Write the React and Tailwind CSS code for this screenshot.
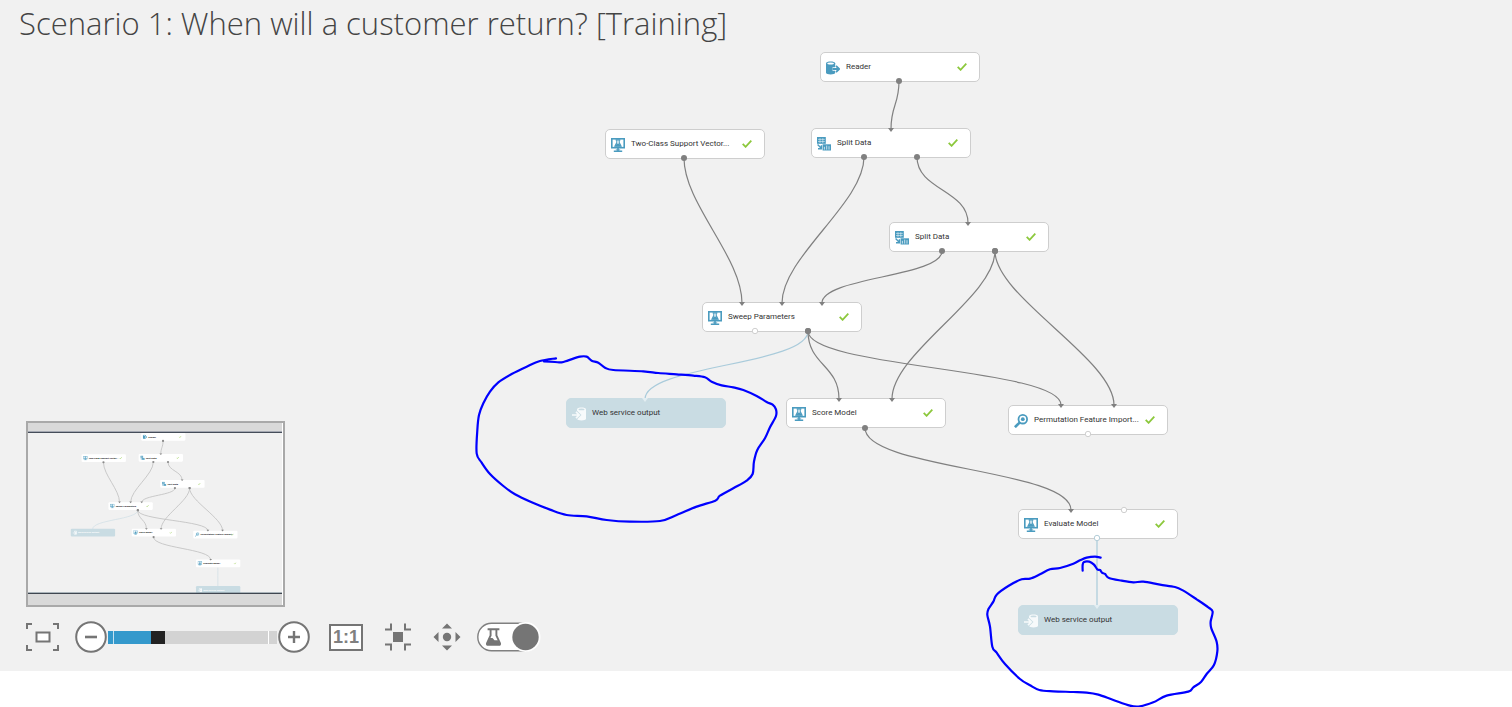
import React, { useState } from "react";

const NODE_W = 160;
const NODE_H = 30;

const nodes = [
  { id: "reader", x: 820, y: 52, label: "Reader", icon: "reader", done: true },
  { id: "svm", x: 605, y: 129, label: "Two-Class Support Vector...", icon: "model", done: true },
  { id: "split1", x: 811, y: 128, label: "Split Data", icon: "split", done: true },
  { id: "split2", x: 889, y: 222, label: "Split Data", icon: "split", done: true },
  { id: "sweep", x: 702, y: 302, label: "Sweep Parameters", icon: "model", done: true },
  { id: "out1", x: 566, y: 398, label: "Web service output", icon: "output", service: true },
  { id: "score", x: 786, y: 398, label: "Score Model", icon: "model", done: true },
  { id: "perm", x: 1008, y: 405, label: "Permutation Feature Import...", icon: "search", done: true },
  { id: "eval", x: 1018, y: 509, label: "Evaluate Model", icon: "model", done: true },
  { id: "out2", x: 1018, y: 605, label: "Web service output", icon: "output", service: true },
];

const edges = [
  { from: [899, 81], to: [891, 129] },
  { from: [684, 158], to: [742, 303] },
  { from: [864, 157], to: [782, 303] },
  { from: [917, 157], to: [968, 223] },
  { from: [942, 251], to: [822, 303] },
  { from: [995, 251], to: [892, 399] },
  { from: [995, 251], to: [1114, 405] },
  { from: [808, 331], to: [645, 399], service: true },
  { from: [808, 331], to: [839, 399] },
  { from: [808, 331], to: [1061, 405] },
  { from: [865, 428], to: [1071, 510] },
  { from: [1097, 538], to: [1097, 606], service: true },
];

const openPorts = [
  { x: 755, y: 331 },
  { x: 1088, y: 434 },
  { x: 1124, y: 510 },
  { x: 1097, y: 538, service: true },
];

const inkLeft = [
  [288, 55], [240, 63], [200, 80], [155, 102], [115, 127], [90, 155], [70, 190], [57, 225], [52, 270],
  [50, 340], [65, 368], [90, 402], [130, 438], [165, 463], [215, 487], [270, 509], [320, 525], [380, 529],
  [440, 540], [510, 545], [600, 543], [650, 525], [710, 500], [766, 482], [780, 467], [820, 445], [860, 422],
  [878, 402], [882, 365], [892, 330], [915, 295], [930, 262], [948, 228], [948, 208], [938, 194], [920, 186],
  [890, 168], [850, 150], [820, 142], [785, 136], [755, 125], [735, 112], [700, 107], [650, 103], [595, 99],
  [550, 94], [460, 90], [435, 83], [415, 68], [395, 62], [380, 50], [360, 50], [325, 61], [305, 67], [285, 66], [252, 64],
];

const inkRight = [
  [392, 203], [375, 200], [350, 203], [330, 211], [310, 221], [270, 234], [240, 238], [210, 253], [180, 266],
  [155, 268], [115, 288], [80, 314], [70, 335], [55, 358], [52, 375], [60, 410], [67, 470], [80, 488],
  [105, 522], [150, 567], [180, 586], [208, 600], [250, 604], [310, 606], [350, 608], [385, 614], [430, 630],
  [480, 647], [510, 649], [550, 637], [590, 617], [655, 605], [670, 592], [693, 576], [710, 552], [732, 525],
  [742, 485], [740, 455], [724, 415], [722, 395], [728, 365], [715, 352], [680, 328], [640, 302], [615, 291],
  [570, 284], [520, 275], [490, 277], [455, 272], [417, 264], [405, 252], [396, 248], [390, 240], [382, 238],
  [372, 224], [358, 215], [342, 216], [338, 225], [338, 242],
];

// Catmull-Rom spline through the pen points.
function inkPath(pts) {
  let d = `M${pts[0].join(" ")}`;
  for (let i = 0; i < pts.length - 1; i++) {
    const p0 = pts[i - 1] || pts[i];
    const p1 = pts[i];
    const p2 = pts[i + 1];
    const p3 = pts[i + 2] || p2;
    d += `C${p1[0] + (p2[0] - p0[0]) / 6} ${p1[1] + (p2[1] - p0[1]) / 6} ${p2[0] - (p3[0] - p1[0]) / 6} ${p2[1] - (p3[1] - p1[1]) / 6} ${p2[0]} ${p2[1]}`;
  }
  return d;
}

function edgePath({ from, to }) {
  const reach = Math.min((to[1] - from[1]) / 2, 46);
  return `M${from[0]} ${from[1]}C${from[0]} ${from[1] + reach} ${to[0]} ${to[1] - reach} ${to[0]} ${to[1]}`;
}

function ModelIcon(props) {
  return (
    <svg viewBox="0 0 14 14" width="14" height="14" fill="none" stroke="#4a9bbf" {...props}>
      <rect x="0.8" y="0.8" width="12.4" height="8.9" strokeWidth="1.6" />
      <path d="M7 9.5V12.6M2.8 13.2H11.2" strokeWidth="1.6" />
      <path d="M4.8 11.9H9.2" strokeWidth="0.9" />
      <path d="M4.6 1.9H9.4M5.8 2V4.6L3.9 8.2H10.1L8.2 4.6V2" strokeWidth="1.1" />
      <path d="M5.6 5.4H8.4L9.8 8.4H4.2Z" fill="#4a9bbf" stroke="none" />
    </svg>
  );
}

function SplitIcon(props) {
  return (
    <svg viewBox="0 0 14 14" width="14" height="14" fill="#4a9bbf" {...props}>
      <rect x="0" y="0" width="8.8" height="6.8" />
      <path d="M1 2.4H7.8M1 4.5H7.8M3 1.2V6M5.8 1.2V6" stroke="#fff" strokeWidth="0.5" />
      <path d="M0.6 7.6L4 11M4.4 8.2V11.8H1" fill="none" stroke="#4a9bbf" strokeWidth="1.4" />
      <rect x="5.6" y="7.3" width="8.4" height="6.2" />
      <path d="M7.4 9.8V12.6M9.7 8.6V12.6M12 9.2V12.6" stroke="#fff" strokeWidth="0.7" />
    </svg>
  );
}

function ReaderIcon(props) {
  return (
    <svg viewBox="0 0 14 14" width="14" height="14" {...props}>
      <path d="M0 2.2C0 -0.2 9.2 -0.2 9.2 2.2V11.8C9.2 14 0 14 0 11.8Z" fill="#4a9bbf" />
      <ellipse cx="4.6" cy="2.4" rx="3.3" ry="1" fill="#fff" />
      <path d="M6.5 8H13M10 4.8L13.2 8L10 11.2" fill="none" stroke="#fff" strokeWidth="3.4" />
      <path d="M6.5 8H13M10 4.8L13.2 8L10 11.2" fill="none" stroke="#4a9bbf" strokeWidth="1.8" />
    </svg>
  );
}

function OutputIcon(props) {
  return (
    <svg viewBox="0 0 14 14" width="14" height="14" {...props}>
      <path d="M5 2.2C5 0 14 0 14 2.2V11.8C14 14 5 14 5 11.8Z" fill="#f7fafb" />
      <ellipse cx="9.5" cy="2.4" rx="3.1" ry="0.9" fill="#c9dce3" />
      <path d="M0 8H7M4 4.8L7.2 8L4 11.2" fill="none" stroke="#c9dce3" strokeWidth="3.2" />
      <path d="M0 8H7M4 4.8L7.2 8L4 11.2" fill="none" stroke="#f7fafb" strokeWidth="1.7" />
    </svg>
  );
}

function SearchIcon(props) {
  return (
    <svg viewBox="0 0 14 14" width="14" height="14" fill="none" stroke="#4a9bbf" {...props}>
      <circle cx="8.8" cy="5.2" r="4.3" strokeWidth="1.8" />
      <circle cx="8.8" cy="5.2" r="1.9" fill="#4a9bbf" stroke="none" />
      <path d="M5.6 8.6L0.9 13.2" strokeWidth="2.6" />
    </svg>
  );
}

const icons = {
  model: ModelIcon,
  split: SplitIcon,
  reader: ReaderIcon,
  output: OutputIcon,
  search: SearchIcon,
};

function Check(props) {
  return (
    <svg viewBox="0 0 10 8" width="10" height="8" fill="none" stroke="#8cc83c" strokeWidth="1.8" {...props}>
      <path d="M0.7 3.8L3.6 6.8L9.3 0.7" />
    </svg>
  );
}

function ModuleNode({ node }) {
  const Icon = icons[node.icon];
  const tone = node.service ? "border-[#c9dce3] bg-[#c9dce3]" : "border-[#cecece] bg-white";
  return (
    <div
      className={`absolute flex h-[30px] w-[160px] items-center gap-[6px] rounded-[5px] border pr-3 pl-[5px] ${tone}`}
      style={{ left: node.x, top: node.y }}
    >
      <Icon className="mt-[2px] shrink-0" aria-hidden="true" />
      <span className="min-w-0 flex-1 font-[Roboto,sans-serif] text-[8px] leading-[12px] whitespace-nowrap text-[#333333]">
        {node.label}
      </span>
      {node.done && <Check className="shrink-0" role="img" aria-label="Finished" />}
    </div>
  );
}

function Edges() {
  return (
    <g fill="none" strokeWidth="1.2">
      {edges.map((e, i) => (
        <path key={i} d={edgePath(e)} stroke={e.service ? "#a9cbdb" : "#808080"} />
      ))}
    </g>
  );
}

function Ports() {
  return (
    <g>
      {edges.map((e, i) => (
        <g key={i}>
          {!e.service && <circle cx={e.from[0]} cy={e.from[1]} r="3" fill="#808080" />}
          <path
            d={`M${e.to[0] - 3} ${e.to[1] - 1}h6l-3 4z`}
            fill={e.service ? "#e3eef2" : "#808080"}
          />
        </g>
      ))}
      {openPorts.map((p, i) => (
        <circle key={i} cx={p.x} cy={p.y} r="2.7" fill="#fff" stroke={p.service ? "#b4ced9" : "#d0d0d0"} />
      ))}
    </g>
  );
}

function MiniMap() {
  return (
    <div className="w-[259px] border-2 border-[#a9a9a9]">
      <svg viewBox="0 0 255 182" className="block w-full" role="img" aria-label="Experiment overview">
        <rect width="254" height="182" fill="#f1f1f1" />
        <rect width="254" height="9" fill="#d9d9d9" />
        <rect y="171" width="254" height="11" fill="#d9d9d9" />
        <rect y="8" width="254" height="1" fill="#a4a8b2" />
        <rect y="9" width="254" height="1" fill="#454d5a" />
        <rect x="254" width="1" height="182" fill="#fff" />
        <g transform="translate(-114 -4.5) scale(0.277)">
          <g fill="none" strokeWidth="3">
            {edges.map((e, i) => (
              <path key={i} d={edgePath(e)} stroke={e.service ? "#d3e1e7" : "#c0c0c0"} />
            ))}
          </g>
          {nodes.map((n) => {
            const Icon = icons[n.icon];
            return (
              <g key={n.id}>
                <rect
                  x={n.x}
                  y={n.y}
                  width={NODE_W}
                  height={NODE_H - 2}
                  rx="4"
                  fill={n.service ? "#c9dce3" : "#fff"}
                />
                <Icon x={n.x + 6} y={n.y + 6} width="16" height="16" />
                <text
                  x={n.x + 26}
                  y={n.y + 17}
                  fontSize="8"
                  fontWeight="700"
                  fill={n.service ? "#fff" : "#111"}
                >
                  {n.label}
                </text>
                {n.done && <Check x={n.x + 136} y={n.y + 10} />}
              </g>
            );
          })}
          <g>
            {edges
              .filter((e) => !e.service)
              .map((e, i) => (
                <g key={i} fill="#8a8a8a">
                  <circle cx={e.from[0]} cy={e.from[1]} r="4" />
                  <path d={`M${e.to[0] - 5} ${e.to[1] - 3}h10l-5 6z`} />
                </g>
              ))}
          </g>
        </g>
        <rect y="169" width="254" height="1" fill="#7c8c96" fillOpacity="0.6" />
        <rect y="170" width="254" height="1" fill="#3f4650" />
      </svg>
    </div>
  );
}

function ZoomSlider() {
  const [zoom, setZoom] = useState(28);
  return (
    <div className="flex items-center">
      <button type="button" aria-label="Zoom out" className="block">
        <svg viewBox="0 0 32 32" className="size-8" stroke="#757575" strokeWidth="2">
          <circle cx="16" cy="16" r="14.8" fill="#fff" />
          <path d="M10 16H22" strokeWidth="2.6" />
        </svg>
      </button>
      <div className="relative mx-[1px] flex h-[13px] w-[169px]">
        <input
          type="range"
          aria-label="Zoom level"
          min="0"
          max="100"
          value={zoom}
          onChange={(e) => setZoom(Number(e.target.value))}
          className="m-0 h-[13px] w-full cursor-pointer appearance-none [&::-webkit-slider-thumb]:h-[13px] [&::-webkit-slider-thumb]:w-[14px] [&::-webkit-slider-thumb]:appearance-none [&::-webkit-slider-thumb]:bg-[#222222]"
          style={{ background: `linear-gradient(to right, #3499cc ${zoom}%, #d3d3d3 ${zoom}%)` }}
        />
        <span className="pointer-events-none absolute inset-y-0 left-[5px] w-[1px] bg-[#c5e2f1]" />
        <span className="pointer-events-none absolute inset-y-0 right-[8px] w-[1px] bg-white" />
      </div>
      <button type="button" aria-label="Zoom in" className="block">
        <svg viewBox="0 0 32 32" className="size-8" stroke="#757575" strokeWidth="2">
          <circle cx="16" cy="16" r="14.8" fill="#fff" />
          <path d="M10 16H22M16 10V22" strokeWidth="2.4" />
        </svg>
      </button>
    </div>
  );
}

function Toolbar() {
  const [locked, setLocked] = useState(true);
  return (
    <div className="flex items-center">
      <button type="button" aria-label="Zoom to fit" className="mr-4 block">
        <svg viewBox="0 0 33 28" className="h-7 w-[33px]" fill="none" stroke="#757575" strokeWidth="2">
          <path d="M1 6V1H6M27 1H32V6M32 22V27H27M6 27H1V22" />
          <rect x="10.5" y="9.5" width="13" height="9" fill="#fff" />
        </svg>
      </button>
      <ZoomSlider />
      <button
        type="button"
        aria-label="Actual size"
        className="ml-[19px] flex h-[27px] w-[34px] items-center justify-center border-2 border-[#757575] bg-white font-['Liberation_Sans',sans-serif] text-[18px] leading-none font-bold text-[#808080]"
      >
        1:1
      </button>
      <button type="button" aria-label="Collapse to center" className="ml-[21px] block">
        <svg viewBox="0 0 28 28" className="size-7" fill="none" stroke="#757575" strokeWidth="2">
          <path d="M1 6.5H7V0.5M21 0.5V6.5H27M27 21.5H21V27.5M7 27.5V21.5H1" />
          <rect x="9" y="9" width="10" height="10" fill="#757575" stroke="none" />
        </svg>
      </button>
      <button type="button" aria-label="Pan" className="ml-[21px] block">
        <svg viewBox="0 0 28 28" className="size-7" fill="#757575">
          <circle cx="14" cy="14" r="4.2" />
          <path d="M14 0.5L19 5.5H9ZM14 27.5L9 22.5H19ZM0.5 14L5.5 9V19ZM27.5 14L22.5 9V19Z" />
        </svg>
      </button>
      <button
        type="button"
        role="switch"
        aria-checked={locked}
        aria-label="Predictive experiment"
        onClick={() => setLocked(!locked)}
        className="ml-4 block"
      >
        <svg viewBox="0 0 64 30" className="h-[30px] w-16">
          <rect x="0.8" y="1.3" width="60" height="27.4" rx="13.7" fill="#fff" stroke="#808080" strokeWidth="1.4" />
          <circle cx={locked ? 48.5 : 15.5} cy="15" r="15" fill="#fff" />
          <circle cx={locked ? 48.5 : 15.5} cy="15" r="13.2" fill="#757575" />
          <g transform={locked ? "translate(9 6)" : "translate(38 6)"}>
            <path
              d="M1.6 1.2H13.4M4.6 1.5V7.5L1 15.2Q0.6 16.8 2 16.8H13Q14.4 16.8 14 15.2L10.4 7.5V1.5"
              fill="none"
              stroke="#757575"
              strokeWidth="1.9"
            />
            <path d="M3.4 10H6.5L8.5 12.2H12.4L14 16.5H1Z" fill="#757575" />
          </g>
        </svg>
      </button>
    </div>
  );
}

export default function App() {
  return (
    <div className="flex min-h-screen flex-col overflow-x-hidden bg-white font-['Open_Sans','Noto_Sans',sans-serif]">
      <main className="relative flex flex-1 flex-col justify-between bg-[#f1f1f1]">
        <h1 className="pl-[19px] text-[31px] leading-[46px] font-light whitespace-nowrap text-[#444444]">
          Scenario 1: When will a customer return? [Training]
        </h1>

        <section aria-label="Experiment canvas" className="absolute inset-0">
          <svg className="absolute inset-0 size-full overflow-visible" aria-hidden="true">
            <Edges />
          </svg>
          {nodes.map((n) => (
            <ModuleNode key={n.id} node={n} />
          ))}
          <svg className="pointer-events-none absolute inset-0 size-full overflow-visible" aria-hidden="true">
            <Ports />
            <g fill="none" stroke="#0000ff" strokeWidth="6.6" strokeLinecap="round" strokeLinejoin="round">
              <path d={inkPath(inkLeft)} transform="translate(460 340) scale(0.3333)" />
              <path d={inkPath(inkRight)} transform="translate(970 490) scale(0.3333)" />
            </g>
          </svg>
        </section>

        <div className="relative flex flex-col gap-[14px] self-start pb-[18px] pl-[26px]">
          <MiniMap />
          <Toolbar />
        </div>
      </main>
      <div className="h-9" />
    </div>
  );
}
